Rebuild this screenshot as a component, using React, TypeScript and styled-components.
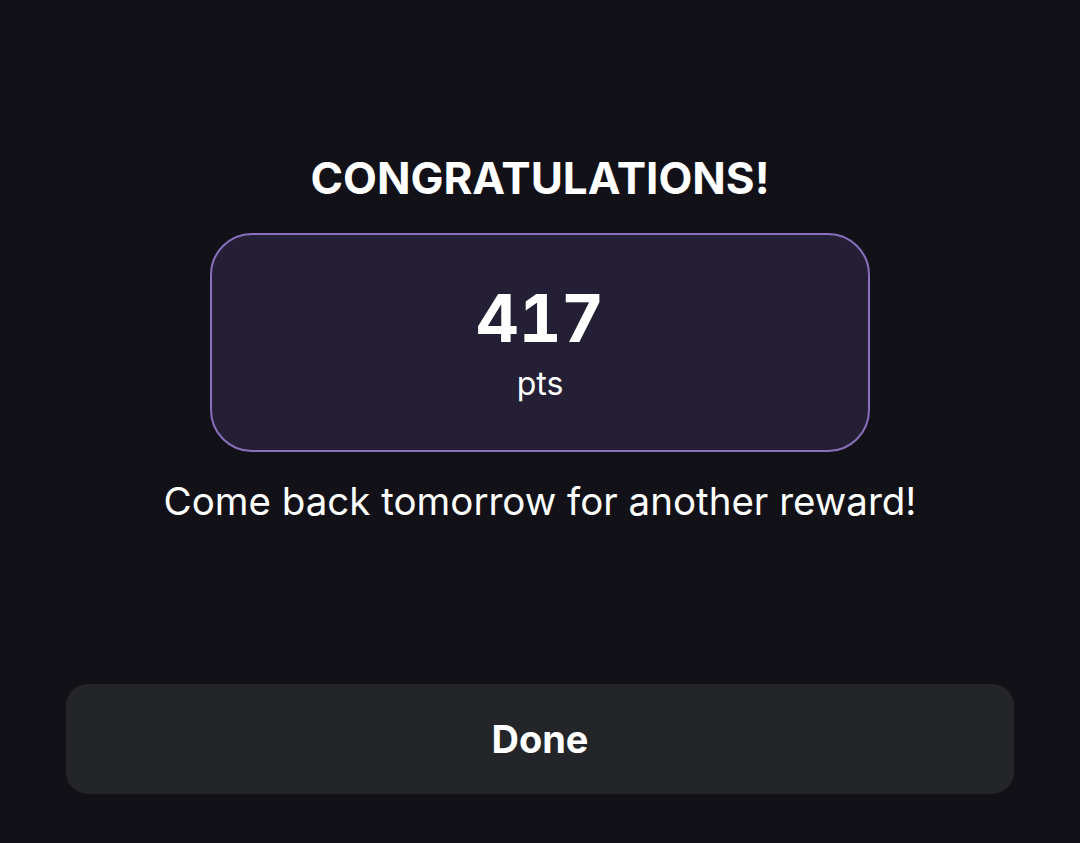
import React from "react";
import styled, { createGlobalStyle } from "styled-components";

const GlobalStyle = createGlobalStyle`
  html, body {
    margin: 0;
    padding: 0;
    background: #121118;
  }
  body {
    font-family: Inter, "Noto Sans", sans-serif;
    color: #ffffff;
  }
`;

const Screen = styled.div`
  width: 1080px;
  height: 843px;
  box-sizing: border-box;
  display: flex;
  flex-direction: column;
  align-items: center;
  padding: 150px 66px 49px;
`;

const Title = styled.h1`
  margin: 0;
  font-size: 44px;
  line-height: 56px;
  font-weight: 700;
`;

const RewardCard = styled.div`
  margin-top: 27px;
  width: 660px;
  height: 219px;
  box-sizing: border-box;
  border: 2px solid #8b6fbf;
  border-radius: 42px;
  background: #241f35;
  display: flex;
  flex-direction: column;
  align-items: center;
  justify-content: center;
`;

const Points = styled.div`
  font-size: 66px;
  font-weight: 700;
  line-height: 76px;
  margin-top: -2px;
  font-variant-numeric: tabular-nums;
  font-feature-settings: "tnum" 1;
`;

const Unit = styled.div`
  font-size: 32px;
  line-height: 40px;
  font-weight: 400;
  margin-top: 8px;
`;

const Message = styled.p`
  margin: 26px 0 0;
  font-size: 38.5px;
  line-height: 46px;
  font-weight: 400;
`;

const Spacer = styled.div`
  flex: 1;
`;

const DoneButton = styled.button`
  width: 100%;
  height: 110px;
  border: none;
  border-radius: 22px;
  background: #242529;
  color: #ffffff;
  font-family: inherit;
  font-size: 38px;
  font-weight: 700;
  cursor: pointer;
`;

export default function App() {
  return (
    <>
      <GlobalStyle />
      <Screen>
        <Title>CONGRATULATIONS!</Title>
        <RewardCard>
          <Points>417</Points>
          <Unit>pts</Unit>
        </RewardCard>
        <Message>Come back tomorrow for another reward!</Message>
        <Spacer />
        <DoneButton>Done</DoneButton>
      </Screen>
    </>
  );
}
